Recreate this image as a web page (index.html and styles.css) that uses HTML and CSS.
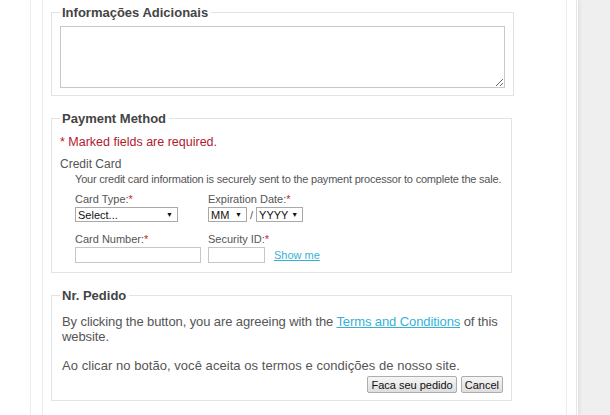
FILE: index.html
```html
<!DOCTYPE html>
<html>
<head>
<meta charset="utf-8">
<link rel="stylesheet" href="styles.css">
</head>
<body>
<div class="page">
  <div class="outer">
    <div class="inner">
      <fieldset class="fs fs-info">
        <legend>Informações Adicionais</legend>
        <textarea class="notes"></textarea>
      </fieldset>

      <fieldset class="fs fs-pay">
        <legend>Payment Method</legend>
        <p class="required">* Marked fields are required.</p>
        <p class="cc-title">Credit Card</p>
        <p class="cc-desc">Your credit card information is securely sent to the payment processor to complete the sale.</p>
        <div class="grid">
          <div class="field">
            <label>Card Type:<span class="star">*</span></label>
            <div class="sel sel-type"><span>Select...</span><i>&#9660;</i></div>
          </div>
          <div class="field">
            <label>Expiration Date:<span class="star">*</span></label>
            <div class="row">
              <div class="sel sel-mm"><span>MM</span><i>&#9660;</i></div>
              <span class="slash">/</span>
              <div class="sel sel-yy"><span>YYYY</span><i>&#9660;</i></div>
            </div>
          </div>
          <div class="field">
            <label>Card Number:<span class="star">*</span></label>
            <div class="inp inp-num"></div>
          </div>
          <div class="field">
            <label>Security ID:<span class="star">*</span></label>
            <div class="row">
              <div class="inp inp-sec"></div>
              <a class="show" href="#">Show me</a>
            </div>
          </div>
        </div>
      </fieldset>

      <fieldset class="fs fs-order">
        <legend>Nr. Pedido</legend>
        <p class="agree">By clicking the button, you are agreeing with the <a href="#">Terms and Conditions</a> of this website.</p>
        <p class="agree-pt">Ao clicar no botão, você aceita os termos e condições de nosso site.</p>
        <div class="buttons">
          <button class="btn">Faca seu pedido</button>
          <button class="btn">Cancel</button>
        </div>
      </fieldset>
    </div>
  </div>
</div>
</body>
</html>
```

FILE: styles.css
```css
html, body {
  margin: 0;
  padding: 0;
  height: 100%;
  background: #efefef;
  overflow: hidden;
}
body {
  font-family: "Liberation Sans", Arial, sans-serif;
  color: #555;
}
.page {
  width: 578px;
  height: 415px;
  background: #fff;
  box-shadow: 2px 0 3px rgba(0,0,0,0.06);
}
.outer {
  margin-left: 30px;
  width: 547px;
  height: 415px;
  border-left: 1px solid #ececec;
  border-right: 1px solid #e6e6e6;
  padding-left: 11px;
  box-sizing: border-box;
}
.inner {
  width: 525px;
  height: 415px;
  border-left: 1px solid #ececec;
  border-right: 1px solid #ececec;
  box-sizing: border-box;
  padding-left: 8px;
  padding-top: 5px;
}
.fs {
  width: 461px;
  box-sizing: border-box;
  margin: 0 0 15px 0;
  border: 1px solid #e3e3e3;
  padding: 0 8px 0 8px;
}
.fs legend {
  font-weight: bold;
  font-size: 13px;
  color: #444;
  padding: 0 3px 0 2px;
  margin-left: 0;
  line-height: 15px;
}
.fs-info { padding-top: 6px; padding-bottom: 7px; }
.notes {
  display: block;
  width: 445px;
  height: 62px;
  box-sizing: border-box;
  border: 1px solid #c8c8c8;
  margin: 0;
  resize: vertical;
}
.fs-pay { padding-bottom: 9px; }
.required {
  margin: 7px 0 0;
  color: #b3192c;
  font-size: 12.5px;
  line-height: 18px;
}
.cc-title {
  margin: 5px 0 0;
  font-size: 12px;
  line-height: 16px;
}
.cc-desc {
  margin: 0 0 0 15px;
  font-size: 11px;
  line-height: 14px;
  letter-spacing: -0.2px;
  white-space: nowrap;
}
.grid {
  display: grid;
  grid-template-columns: 133px auto;
  row-gap: 10px;
  margin: 6px 0 0 15px;
}
.field label {
  display: block;
  font-size: 11px;
  line-height: 14px;
  margin-bottom: 1px;
}
.star { color: #c0282e; }
.row { display: flex; align-items: center; }
.sel {
  display: flex;
  justify-content: space-between;
  align-items: center;
  height: 15px;
  box-sizing: border-box;
  border: 1px solid #a9a9a9;
  padding: 0 4px 0 2px;
  font-size: 11px;
  color: #111;
  background: #fff;
}
.sel i { font-style: normal; font-size: 7px; }
.sel-type { width: 103px; }
.sel-mm { width: 39px; }
.sel-yy { width: 47px; }
.slash { margin: 0 3px; font-size: 11px; }
.inp {
  height: 16px;
  box-sizing: border-box;
  border: 1px solid #c6c6c6;
  background: #fff;
}
.inp-num { width: 126px; }
.inp-sec { width: 57px; }
.show {
  margin-left: 9px;
  font-size: 11px;
  color: #35b1d6;
}
.fs-order { padding-bottom: 7px; }
.agree {
  margin: 11px 0 0 2px;
  font-size: 13px;
  line-height: 15px;
  letter-spacing: -0.1px;
}
.agree a { color: #35b1d6; }
.agree-pt {
  margin: 14px 0 0 2px;
  font-size: 13px;
  line-height: 15px;
  letter-spacing: 0.05px;
}
.buttons {
  display: flex;
  justify-content: flex-end;
  gap: 4px;
  margin-top: 3px;
}
.btn {
  font-family: "Liberation Sans", Arial, sans-serif;
  font-size: 11px;
  color: #111;
  height: 17px;
  padding: 0 3px;
  border: 1px solid #adadad;
  border-radius: 2px;
  background: linear-gradient(#f6f6f6, #dedede);
}
```
